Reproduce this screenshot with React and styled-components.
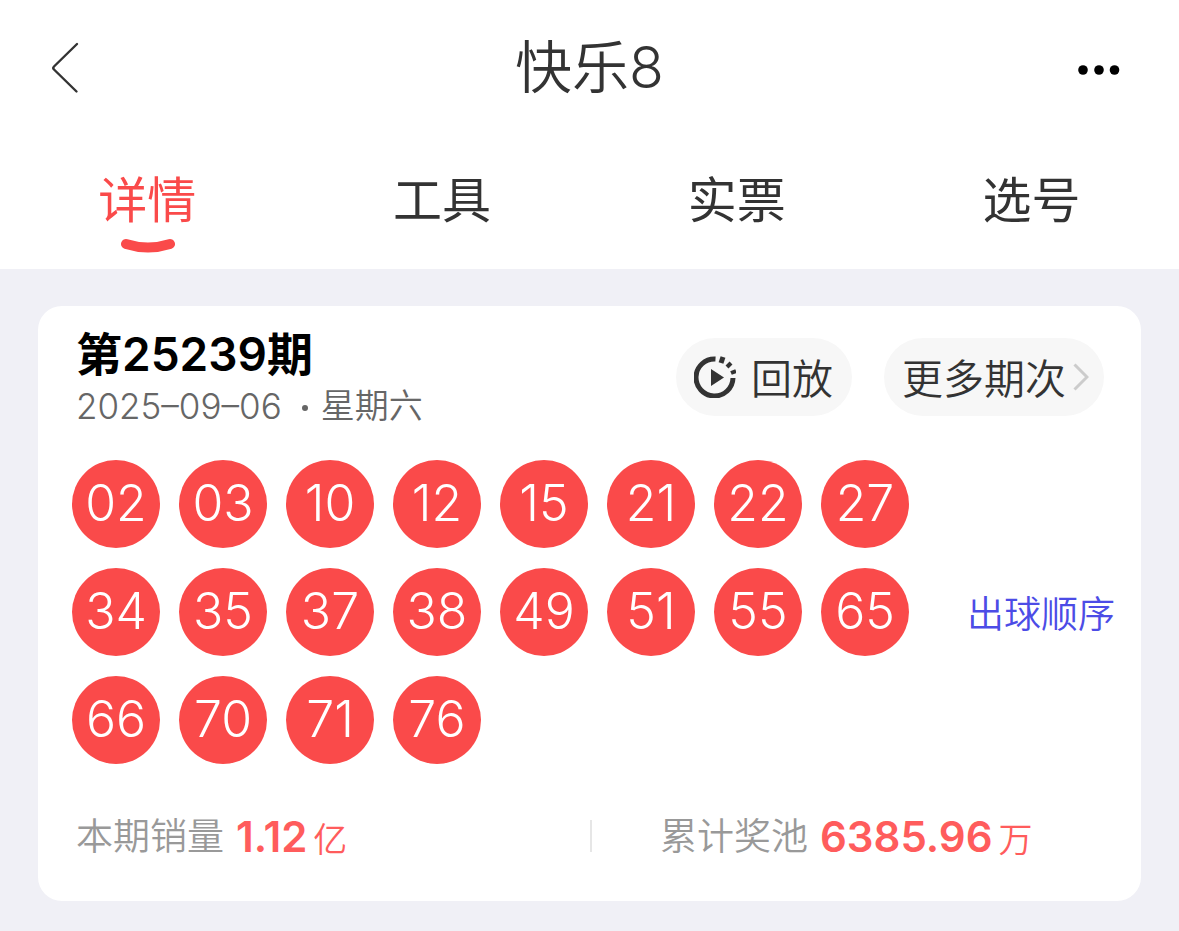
import styled, { createGlobalStyle } from "styled-components";

const GlobalStyle = createGlobalStyle`
  * {
    box-sizing: border-box;
  }

  body {
    margin: 0;
    background: #f0f0f6;
    color: #333;
    font-family: Inter, "Noto Sans CJK SC", sans-serif;
    font-weight: 400;
  }
`;

// White block that holds the title bar and the tabs
const Header = styled.header`
  background: #fff;
`;

const TitleBar = styled.div`
  display: grid;
  grid-template-columns: 1fr auto 1fr;
  align-items: center;
  height: 137px;
  padding: 0 50px;
`;

const Button = styled.button`
  display: flex;
  align-items: center;
  padding: 0;
  border: 0;
  background: none;
  color: inherit;
  font: inherit;
  cursor: pointer;
`;

const BackButton = styled(Button)`
  justify-self: start;
  padding-bottom: 2px;
`;

const MoreButton = styled(Button)`
  justify-self: end;
  padding: 2px 9px 0;
`;

const Title = styled.h1`
  margin: 0;
  padding-bottom: 2px;
  font-size: 57px;
  font-weight: 350;
  line-height: 80px;
`;

const Tabs = styled.nav`
  display: grid;
  grid-template-columns: repeat(4, 1fr);
  height: 132px;
  padding-top: 30px;
`;

const Tab = styled.a`
  display: flex;
  flex-direction: column;
  align-items: center;
  gap: 3px;
  color: ${(props) => (props.$active ? "#fa4a4a" : "#333")};
  font-size: 49px;
  line-height: 68px;
  text-decoration: none;
`;

const Card = styled.main`
  margin: 37px 38px 30px;
  padding: 16px 26px 33px 34px;
  border-radius: 24px;
  background: #fff;
`;

const CardTop = styled.div`
  display: flex;
  justify-content: space-between;
  padding: 0 11px 0 4px;
`;

const Issue = styled.h2`
  margin: 0;
  color: #000;
  font-size: 46px;
  font-weight: 600;
  line-height: 64px;
`;

const DateLine = styled.p`
  display: flex;
  align-items: center;
  margin: 0;
  color: #666;
  font-size: 35px;
  font-weight: 300;
  line-height: 40px;
`;

const Dot = styled.i`
  width: 6px;
  height: 6px;
  margin: 4px 13px 0 20px;
  border-radius: 50%;
  background: #666;
`;

const Weekday = styled.span`
  font-size: 34px;
  font-weight: 350;
`;

const Actions = styled.div`
  display: flex;
  gap: 32px;
  padding-top: 16px;
`;

const Pill = styled(Button)`
  gap: ${(props) => props.$gap};
  height: 78px;
  padding: ${(props) => props.$padding};
  border-radius: 39px;
  background: #f7f7f7;
  font-size: 41px;
  font-weight: 350;
  white-space: nowrap;
`;

const PillText = styled.span`
  padding-bottom: 3px;
`;

const Draw = styled.section`
  display: flex;
  align-items: center;
  justify-content: space-between;
  margin-top: 34px;
`;

const Balls = styled.ol`
  display: grid;
  grid-template-columns: repeat(8, 88px);
  gap: 20px 19px;
  margin: 0;
  padding: 0;
  list-style: none;
`;

const Ball = styled.li`
  height: 88px;
  border-radius: 50%;
  background: #fa4a4a;
  color: #fff;
  font-size: 50px;
  font-weight: 350;
  line-height: 86px;
  text-align: center;
`;

const OrderLink = styled.a`
  padding-top: 5px;
  color: #4c4ce6;
  font-size: 37px;
  font-weight: 350;
  line-height: 52px;
  text-decoration: none;
  white-space: nowrap;
`;

const Totals = styled.div`
  display: grid;
  grid-template-columns: 1fr 1fr;
  margin-top: 40px;
  padding: 0 11px 0 4px;
`;

const Total = styled.p`
  display: flex;
  align-items: center;
  height: 64px;
  margin: 0;
  color: #999;
  font-size: 37px;
  white-space: nowrap;
`;

const TotalLabel = styled.span`
  padding: 0 12px 4px 0;
  font-weight: 350;
`;

const Divider = styled.i`
  width: 2px;
  height: 32px;
  margin-right: 68px;
  background: #e6e6e6;
`;

const Amount = styled.strong`
  color: #ff5c5c;
  font-size: 42px;
  font-weight: 600;
`;

const Unit = styled.span`
  margin-left: 6px;
  font-size: 34px;
  font-weight: 350;
`;

const tabs = ["详情", "工具", "实票", "选号"];

const numbers = [
  "02", "03", "10", "12", "15", "21", "22", "27",
  "34", "35", "37", "38", "49", "51", "55", "65",
  "66", "70", "71", "76",
];

const BackIcon = () => (
  <svg width="30" height="52" viewBox="0 0 30 52" fill="none" stroke="#333" strokeWidth="2.4" strokeLinecap="round" strokeLinejoin="round">
    <path d="M27 2 L4 24.5 Q2.5 26 4 27.5 L26.500 49.500" />
  </svg>
);

const MoreIcon = () => (
  <svg width="42" height="10" viewBox="0 0 42 10">
    <circle cx="5" cy="5" r="4.800" />
    <circle cx="21" cy="5" r="4.800" />
    <circle cx="36.500" cy="5" r="4.800" />
  </svg>
);

const Smile = () => (
  <svg width="56" height="18" viewBox="0 0 56 18" fill="none" stroke="#fa4a4a" strokeWidth="10" strokeLinecap="round">
    <path d="M7 6 Q29 13 51 6" />
  </svg>
);

const ReplayIcon = () => (
  <svg width="42" height="42" viewBox="0 0 42 42" fill="none" stroke="#333" strokeWidth="5">
    <path d="M21.500 3 A18.500 18.500 0 1 0 39 22" />
    <path d="M29 1 L27 7" />
    <path d="M37 7 L33 11" strokeWidth="4" />
    <path d="M42 15 L37 17" strokeWidth="4" />
    <path d="M17 13 L30 21.500 L17 30 Z" fill="#333" stroke="none" />
  </svg>
);

const ChevronIcon = () => (
  <svg width="16" height="28" viewBox="0 0 16 28" fill="none" stroke="#ccc" strokeWidth="3">
    <path d="M1.500 1.500 L14 14 L1.500 26.500" />
  </svg>
);

export default function App() {
  return (
    <>
      <GlobalStyle />
      <Header>
        <TitleBar>
          <BackButton aria-label="返回">
            <BackIcon />
          </BackButton>
          <Title>快乐8</Title>
          <MoreButton aria-label="更多">
            <MoreIcon />
          </MoreButton>
        </TitleBar>
        <Tabs>
          {tabs.map((tab, i) => (
            <Tab key={tab} href="#" $active={i === 0}>
              {tab}
              {i === 0 && <Smile />}
            </Tab>
          ))}
        </Tabs>
      </Header>

      <Card>
        <CardTop>
          <div>
            <Issue>第25239期</Issue>
            <DateLine>
              2025–09–06
              <Dot />
              <Weekday>星期六</Weekday>
            </DateLine>
          </div>
          <Actions>
            <Pill $gap="15px" $padding="0 19px 0 18px">
              <ReplayIcon />
              <PillText>回放</PillText>
            </Pill>
            <Pill $gap="7px" $padding="0 15px 0 18px">
              <PillText>更多期次</PillText>
              <ChevronIcon />
            </Pill>
          </Actions>
        </CardTop>

        <Draw>
          <Balls>
            {numbers.map((n) => (
              <Ball key={n}>{n}</Ball>
            ))}
          </Balls>
          <OrderLink href="#">出球顺序</OrderLink>
        </Draw>

        <Totals>
          <Total>
            <TotalLabel>本期销量</TotalLabel>
            <Amount>
              1.12<Unit>亿</Unit>
            </Amount>
          </Total>
          <Total>
            <Divider />
            <TotalLabel>累计奖池</TotalLabel>
            <Amount>
              6385.96<Unit>万</Unit>
            </Amount>
          </Total>
        </Totals>
      </Card>
    </>
  );
}
